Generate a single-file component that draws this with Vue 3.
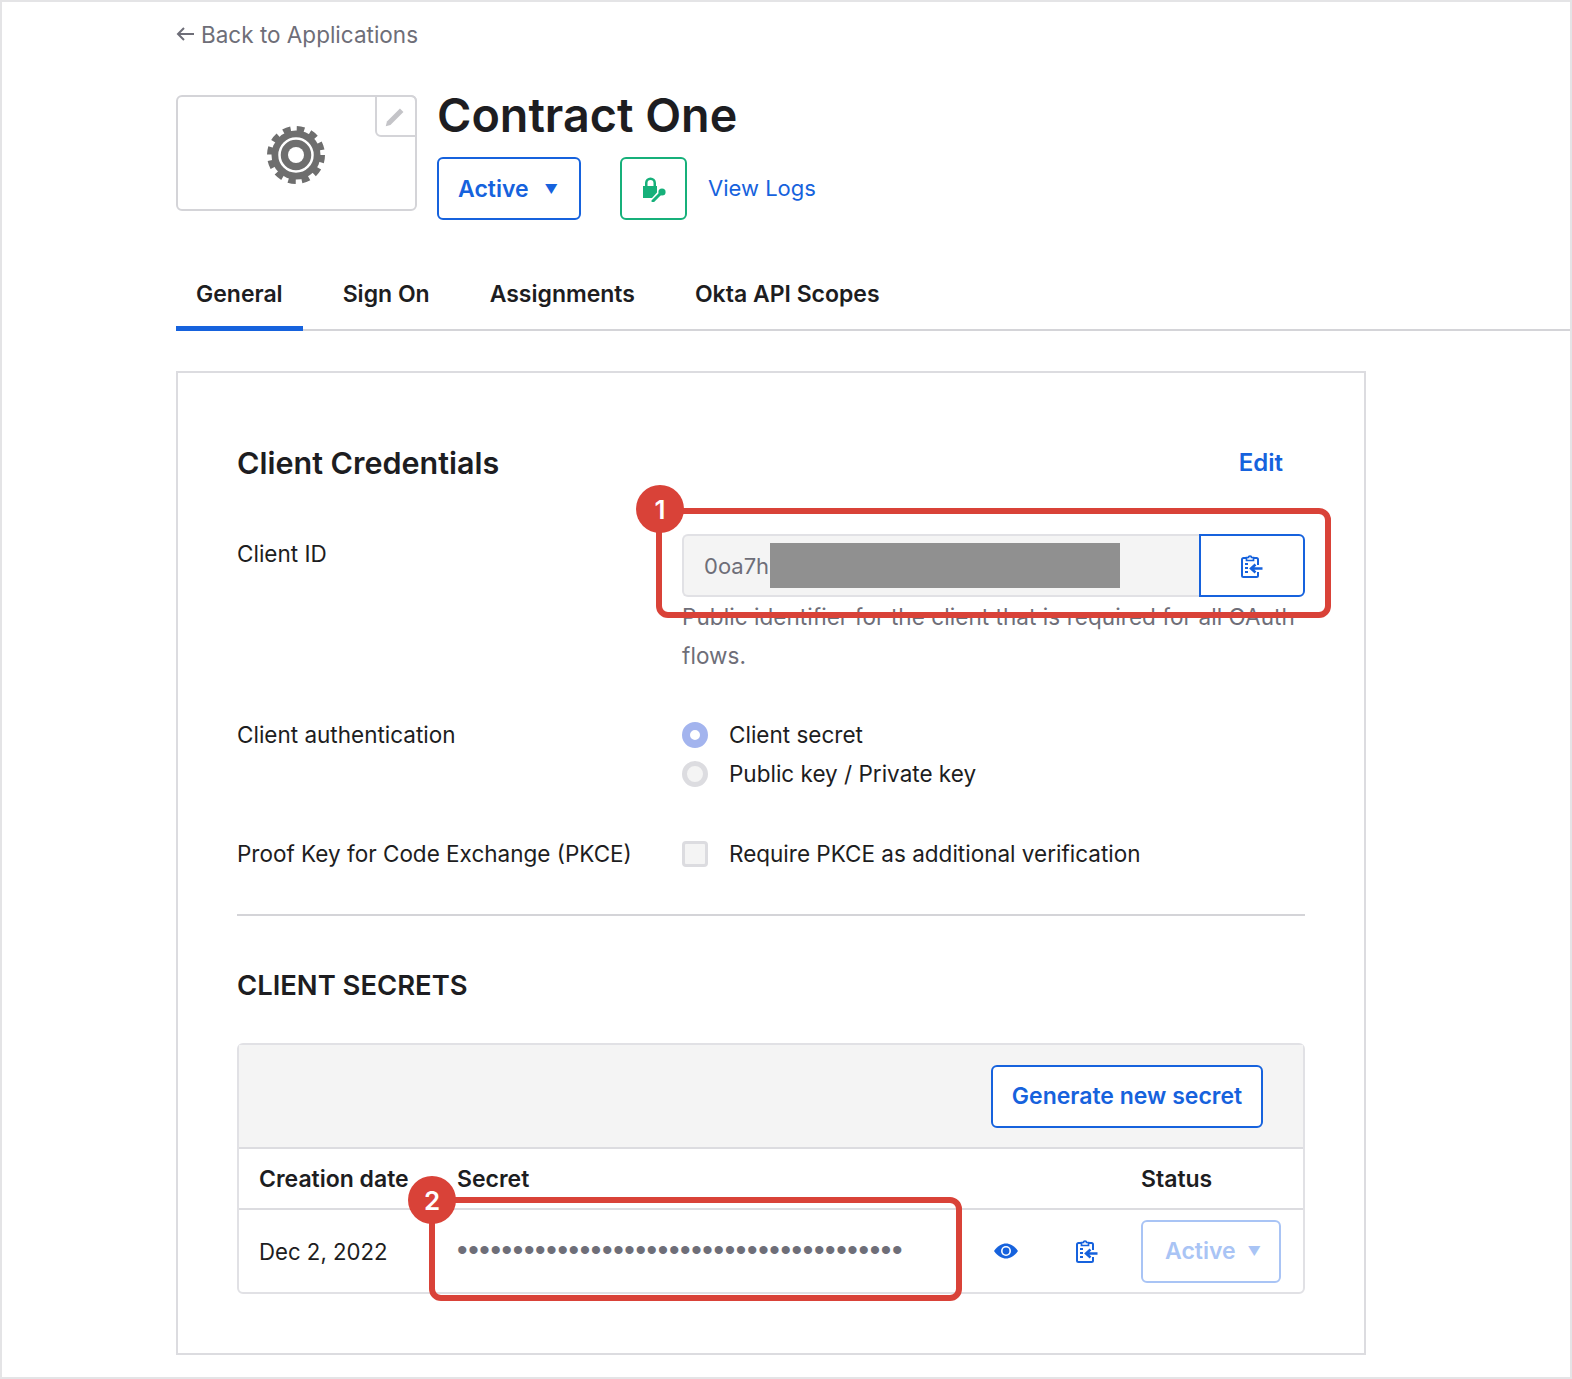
<script setup>
const dots = '•'.repeat(40)
</script>

<template>
  <div class="page">
    <div class="inner">
      <a class="back"><span class="arrow"><svg width="20" height="16" viewBox="0 0 20 16"><path d="M18 8H2M8 2L2 8l6 6" fill="none" stroke="#6e6e78" stroke-width="2"/></svg></span>Back to Applications</a>
      <div class="head">
        <div class="logo">
          <svg class="gear" width="62" height="62" viewBox="0 0 62 62">
            <circle cx="31" cy="31" r="26" fill="none" stroke="#6e6e6e" stroke-width="6" stroke-dasharray="7.500 6.110" stroke-linejoin="round"/>
            <circle cx="31" cy="31" r="24.500" fill="#6e6e6e"/>
            <circle cx="31" cy="31" r="16.500" fill="#6e6e6e" stroke="#fff" stroke-width="2.500"/>
            <circle cx="31" cy="31" r="8" fill="#fff"/>
          </svg>
          <span class="pencil"><svg width="26" height="26" viewBox="0 0 22 22"><path d="M16 3l3 3L8 17l-4 1 1-4z" fill="#c4c4c8"/></svg></span>
        </div>
        <div class="head-main">
          <h1>Contract One</h1>
          <div class="actions">
            <button class="btn status">Active<span class="caret">▼</span></button>
            <button class="btn lock">
              <svg width="28" height="26" viewBox="0 0 28 26">
                <path d="M3 10h2V7a5.500 5.500 0 0 1 11 0v3h1v6.500l-5 5.500H3zM7.500 10h6V7a3 3 0 0 0-6 0z" fill="#16b07a" fill-rule="evenodd"/>
                <path d="M13 25l7-7" stroke="#16b07a" stroke-width="3" stroke-linecap="round"/>
                <circle cx="22" cy="16" r="3.600" fill="#16b07a"/>
              </svg>
            </button>
            <a class="logs">View Logs</a>
          </div>
        </div>
      </div>
    </div>

    <nav class="tabs">
      <a class="tab active">General</a>
      <a class="tab">Sign On</a>
      <a class="tab">Assignments</a>
      <a class="tab">Okta API Scopes</a>
    </nav>

    <section class="card">
      <div class="card-head">
        <h2>Client Credentials</h2>
        <a class="edit">Edit</a>
      </div>

      <div class="row client-id">
        <div class="label">Client ID</div>
        <div class="field">
          <div class="input-group">
            <div class="input">0oa7h<span class="redact"></span></div>
            <button class="copy">
              <svg class="clip" width="22" height="24" viewBox="0 0 22 24"><use href="#clip-icon"/></svg>
            </button>
          </div>
          <p class="help">Public identifier for the client that is required for all OAuth flows.</p>
        </div>
        <div class="callout one"><span class="badge">1</span></div>
      </div>

      <div class="row auth">
        <div class="label">Client authentication</div>
        <div class="field">
          <div class="option"><span class="radio on"></span>Client secret</div>
          <div class="option"><span class="radio"></span>Public key / Private key</div>
        </div>
      </div>

      <div class="row pkce">
        <div class="label">Proof Key for Code Exchange (PKCE)</div>
        <div class="field">
          <div class="option"><span class="check"></span>Require PKCE as additional verification</div>
        </div>
      </div>

      <hr class="rule" />
      <h3>CLIENT SECRETS</h3>

      <div class="table">
        <div class="toolbar"><button class="btn generate">Generate new secret</button></div>
        <div class="grid thead">
          <div>Creation date</div>
          <div>Secret</div>
          <div></div>
          <div></div>
          <div>Status</div>
        </div>
        <div class="grid tbody">
          <div>Dec 2, 2022</div>
          <div class="dots">{{ dots }}</div>
          <div class="ic">
            <svg width="26" height="18" viewBox="0 0 26 18">
              <path d="M1 9C5 3.500 9 1.500 13 1.500S21 3.500 25 9c-4 5.500-8 7.500-12 7.500S5 14.500 1 9z" fill="#1662dd"/>
              <circle cx="13" cy="9" r="5" fill="#fff"/>
              <circle cx="13" cy="9" r="3.400" fill="#1662dd"/>
            </svg>
          </div>
          <div class="ic">
            <svg class="clip" width="22" height="24" viewBox="0 0 22 24"><use href="#clip-icon"/></svg>
          </div>
          <div><button class="btn status-sm">Active<span class="caret">▼</span></button></div>
        </div>
        <div class="callout two"><span class="badge">2</span></div>
      </div>
    </section>

    <svg class="defs" width="0" height="0">
      <symbol id="clip-icon" viewBox="0 0 22 24">
        <path d="M6 4H2.500A1.500 1.500 0 0 0 1 5.500v16A1.500 1.500 0 0 0 2.500 23h13a1.500 1.500 0 0 0 1.500-1.500V18M17 11V5.500A1.500 1.500 0 0 0 15.500 4H12" fill="none" stroke="#1662dd" stroke-width="2"/>
        <path d="M5.500 6.500V3.500h2a1.500 1.500 0 0 1 3 0h2v3z" fill="none" stroke="#1662dd" stroke-width="1.700"/>
        <path d="M4 10h3M4 14h3M4 18h3" stroke="#1662dd" stroke-width="2"/>
        <path d="M21.500 14.500H11M14.500 10.500l-4.500 4 4.500 4" fill="none" stroke="#1662dd" stroke-width="2.500"/>
      </symbol>
    </svg>
  </div>
</template>

<style scoped>
.page {
  box-sizing: border-box;
  width: 1572px;
  height: 1379px;
  border: 2px solid #e4e4e6;
  padding-top: 18px;
  background: #fff;
  font-family: Inter, "Liberation Sans", sans-serif;
  font-size: 22.500px;
  color: #1d1d21;
  overflow: hidden;
}
.inner { padding-left: 174px; }
.back {
  display: flex;
  align-items: center;
  gap: 5px;
  height: 28px;
  color: #6e6e78;
}
.arrow { display: flex; }
.head {
  display: flex;
  gap: 20px;
  margin-top: 47px;
}
.logo {
  position: relative;
  box-sizing: border-box;
  width: 241px;
  height: 116px;
  border: 2px solid #d4d4d8;
  border-radius: 6px;
  display: flex;
  align-items: center;
  justify-content: center;
}
.gear { margin: 4px 2px 0 0; }
.pencil {
  position: absolute;
  top: -2px;
  right: -2px;
  box-sizing: border-box;
  width: 42px;
  height: 42px;
  padding: 4px 4px 0 0;
  border: 2px solid #d4d4d8;
  border-radius: 0 6px 0 6px;
  display: flex;
  align-items: center;
  justify-content: center;
}
h1 {
  margin: -4px 0 0;
  font-size: 46.700px;
  line-height: 48px;
  font-weight: 600;
}
.actions {
  display: flex;
  align-items: center;
  margin-top: 18px;
}
.btn {
  font: inherit;
  font-size: 23px;
  box-sizing: border-box;
  height: 63px;
  background: #fff;
  border: 2px solid #1662dd;
  border-radius: 6px;
  color: #1662dd;
  font-weight: 600;
  cursor: pointer;
}
.status { width: 144px; padding: 0 0 0 19px; display: flex; align-items: center; margin-right: 39px; }
.caret { font-size: 13px; margin-left: 16px; }
.lock {
  width: 67px;
  border-color: #16b07a;
  padding: 0;
  display: flex;
  align-items: center;
  justify-content: center;
  margin-right: 21px;
}
.logs { color: #1662dd; margin-top: -2px; font-size: 22px; }

.tabs {
  display: flex;
  gap: 20px;
  margin: 45px 0 0 174px;
  height: 66px;
  box-sizing: border-box;
  border-bottom: 2px solid #d4d4d8;
}
.tab {
  box-sizing: border-box;
  height: 66px;
  padding: 0 20px;
  line-height: 58px;
  font-weight: 600;
  font-size: 23px;
}
.tab.active { border-bottom: 5px solid #1662dd; }

.card {
  box-sizing: border-box;
  width: 1190px;
  height: 984px;
  margin: 40px 0 0 174px;
  border: 2px solid #dcdce0;
  padding: 58px 59px 0;
}
.card-head {
  display: flex;
  align-items: center;
  justify-content: space-between;
  height: 62px;
  padding-right: 22px;
}
h2 {
  margin: 0;
  font-size: 30.500px;
  font-weight: 600;
}
.edit { color: #1662dd; font-weight: 600; font-size: 24px; }
.row {
  position: relative;
  display: grid;
  grid-template-columns: 445px 623px;
}
.label { line-height: 39px; }
.client-id { margin-top: 41px; }
.input-group {
  display: flex;
  height: 63px;
}
.input {
  flex: 1;
  box-sizing: border-box;
  display: flex;
  align-items: center;
  padding-left: 20px;
  background: #f4f4f4;
  border: 2px solid #e1e1e5;
  border-right: 0;
  border-radius: 6px 0 0 6px;
  color: #6e6e78;
  font-size: 22px;
}
.redact {
  width: 350px;
  height: 45px;
  background: #909090;
  margin-left: 1px;
}
.copy {
  box-sizing: border-box;
  width: 106px;
  background: #fff;
  border: 2px solid #1662dd;
  border-radius: 0 6px 6px 0;
  padding: 0;
  display: flex;
  align-items: center;
  justify-content: center;
}
.help {
  margin: 0;
  line-height: 39px;
  color: #6e6e78;
  letter-spacing: .06px;
}
.auth { margin-top: 40px; }
.pkce { margin-top: 41px; }
.option {
  display: flex;
  align-items: center;
  gap: 21px;
  height: 39px;
}
.radio {
  box-sizing: border-box;
  width: 26px;
  height: 26px;
  border-radius: 50%;
  background: #f4f4f4;
  border: 5px solid #dcdce0;
}
.radio.on { background: #fff; border: 8px solid #a3b4ee; }
.check {
  box-sizing: border-box;
  width: 26px;
  height: 26px;
  border-radius: 4px;
  background: #f4f4f4;
  border: 3px solid #dcdce0;
}
.rule {
  margin: 41px 0 0;
  border: 0;
  border-top: 2px solid #d4d4d8;
  width: 1068px;
}
h3 {
  margin: 0;
  padding-top: 52px;
  font-size: 27.400px;
  line-height: 34px;
  font-weight: 600;
}
.table {
  position: relative;
  box-sizing: border-box;
  width: 1068px;
  height: 251px;
  margin-top: 41px;
  border: 2px solid #e1e1e5;
  border-radius: 6px;
}
.toolbar {
  box-sizing: border-box;
  height: 104px;
  background: #f4f4f4;
  border-bottom: 2px solid #dcdce0;
  display: flex;
  align-items: center;
  justify-content: flex-end;
  padding-right: 40px;
}
.generate { width: 272px; padding: 0; }
.grid {
  display: grid;
  grid-template-columns: 198px 536px 82px 66px 1fr;
  align-items: center;
  padding-left: 20px;
}
.thead {
  height: 61px;
  box-sizing: border-box;
  border-bottom: 2px solid #dcdce0;
  font-weight: 600;
  font-size: 23px;
}
.tbody { height: 82px; font-size: 22.200px; }
.dots {
  color: #6e6e78;
  font-family: "Liberation Sans", sans-serif;
  font-size: 30px;
  line-height: 30px;
  letter-spacing: .65px;
  white-space: nowrap;
  margin-top: -2px;
}
.ic { display: flex; }
.clip { display: block; }
.tbody .clip { margin-left: 1px; }
.status-sm {
  width: 140px;
  padding: 0 0 0 22px;
  display: flex;
  align-items: center;
  border-color: #a9c4f5;
  color: #a9c4f5;
}
.status-sm .caret { margin-left: 12px; }
.callout {
  position: absolute;
  box-sizing: border-box;
  border: 6px solid #d94238;
  border-radius: 12px;
}
.callout.one { left: 419px; top: -26px; width: 675px; height: 110px; }
.callout.two { left: 190px; top: 152px; width: 533px; height: 104px; }
.badge {
  position: absolute;
  left: -27px;
  top: -27px;
  width: 48px;
  height: 48px;
  border-radius: 50%;
  background: #d94238;
  color: #fff;
  font-weight: 600;
  font-size: 26px;
  display: flex;
  align-items: center;
  justify-content: center;
}
.callout.one .badge { top: -29px; left: -26px; }
.defs { position: absolute; }
</style>
